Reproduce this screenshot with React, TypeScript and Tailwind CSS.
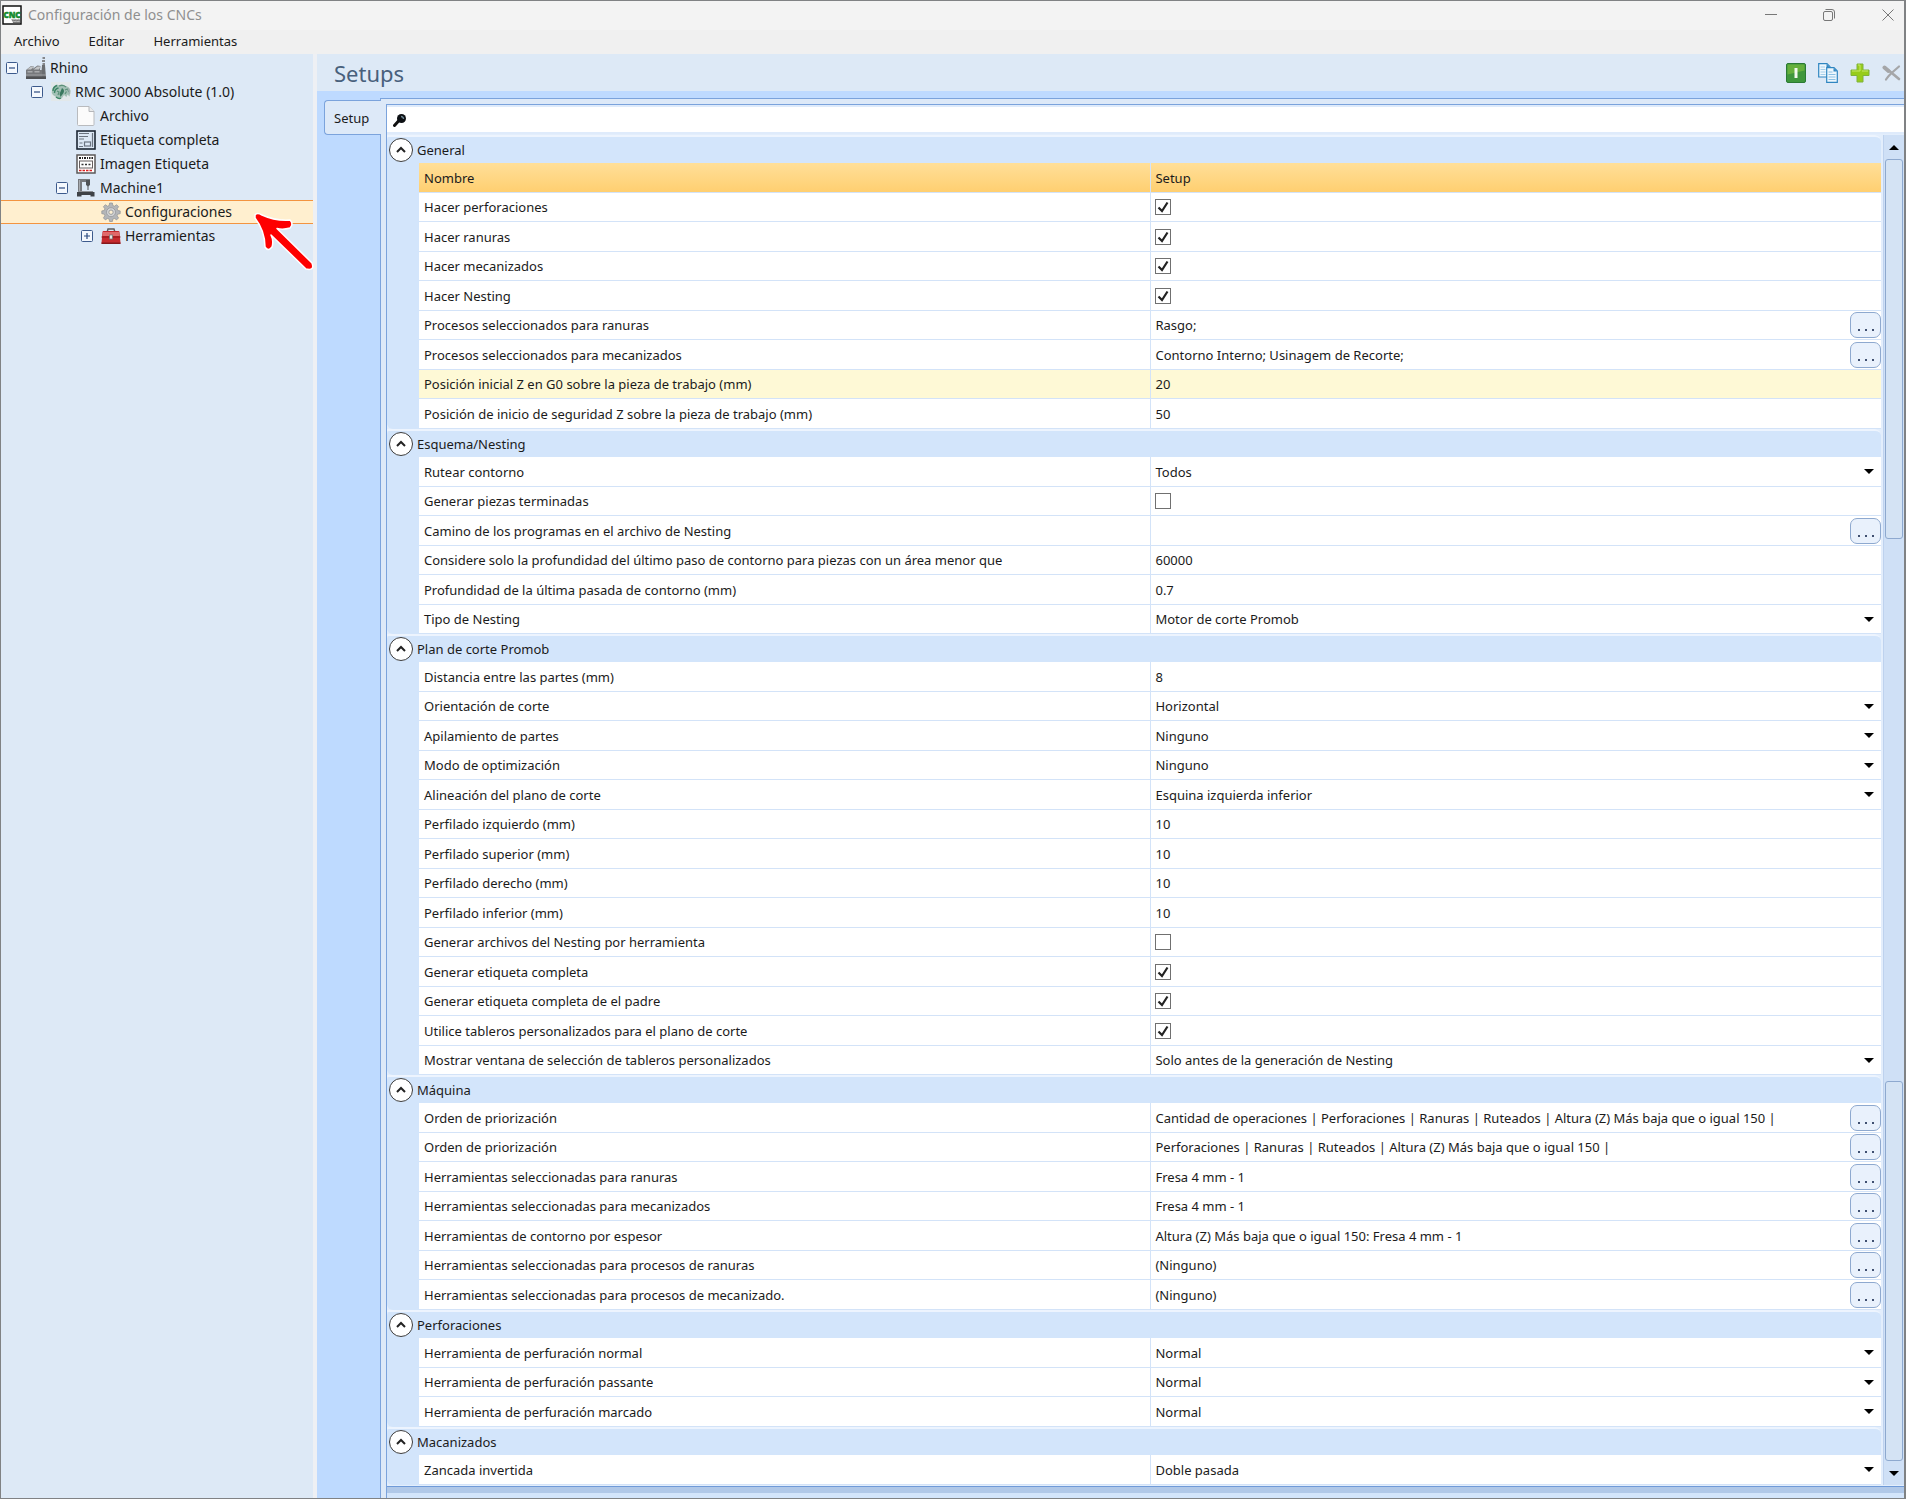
import { useState } from "react";
import type { ReactNode } from "react";

type Row =
  | { kind: "text"; label: string; value: string; tone?: "selected" | "hover" }
  | { kind: "check"; label: string; checked: boolean; tone?: undefined }
  | { kind: "select"; label: string; value: string; tone?: undefined }
  | { kind: "browse"; label: string; value: string; tone?: undefined };

type Section = { title: string; rows: Row[] };

const text = (label: string, value: string, tone?: "selected" | "hover"): Row => ({ kind: "text", label, value, tone });
const check = (label: string, checked: boolean): Row => ({ kind: "check", label, checked });
const select = (label: string, value: string): Row => ({ kind: "select", label, value });
const browse = (label: string, value: string): Row => ({ kind: "browse", label, value });

const sections: Section[] = [
  {
    title: "General",
    rows: [
      text("Nombre", "Setup", "selected"),
      check("Hacer perforaciones", true),
      check("Hacer ranuras", true),
      check("Hacer mecanizados", true),
      check("Hacer Nesting", true),
      browse("Procesos seleccionados para ranuras", "Rasgo;"),
      browse("Procesos seleccionados para mecanizados", "Contorno Interno; Usinagem de Recorte;"),
      text("Posición inicial Z en G0 sobre la pieza de trabajo (mm)", "20", "hover"),
      text("Posición de inicio de seguridad Z sobre la pieza de trabajo (mm)", "50"),
    ],
  },
  {
    title: "Esquema/Nesting",
    rows: [
      select("Rutear contorno", "Todos"),
      check("Generar piezas terminadas", false),
      browse("Camino de los programas en el archivo de Nesting", ""),
      text("Considere solo la profundidad del último paso de contorno para piezas con un área menor que", "60000"),
      text("Profundidad de la última pasada de contorno (mm)", "0.7"),
      select("Tipo de Nesting", "Motor de corte Promob"),
    ],
  },
  {
    title: "Plan de corte Promob",
    rows: [
      text("Distancia entre las partes (mm)", "8"),
      select("Orientación de corte", "Horizontal"),
      select("Apilamiento de partes", "Ninguno"),
      select("Modo de optimización", "Ninguno"),
      select("Alineación del plano de corte", "Esquina izquierda inferior"),
      text("Perfilado izquierdo (mm)", "10"),
      text("Perfilado superior (mm)", "10"),
      text("Perfilado derecho (mm)", "10"),
      text("Perfilado inferior (mm)", "10"),
      check("Generar archivos del Nesting por herramienta", false),
      check("Generar etiqueta completa", true),
      check("Generar etiqueta completa de el padre", true),
      check("Utilice tableros personalizados para el plano de corte", true),
      select("Mostrar ventana de selección de tableros personalizados", "Solo antes de la generación de Nesting"),
    ],
  },
  {
    title: "Máquina",
    rows: [
      browse("Orden de priorización", "Cantidad de operaciones | Perforaciones | Ranuras | Ruteados | Altura (Z) Más baja que o igual 150 |"),
      browse("Orden de priorización", "Perforaciones | Ranuras | Ruteados | Altura (Z) Más baja que o igual 150 |"),
      browse("Herramientas seleccionadas para ranuras", "Fresa 4 mm - 1"),
      browse("Herramientas seleccionadas para mecanizados", "Fresa 4 mm - 1"),
      browse("Herramientas de contorno por espesor", "Altura (Z) Más baja que o igual 150: Fresa 4 mm - 1"),
      browse("Herramientas seleccionadas para procesos de ranuras", "(Ninguno)"),
      browse("Herramientas seleccionadas para procesos de mecanizado.", "(Ninguno)"),
    ],
  },
  {
    title: "Perforaciones",
    rows: [
      select("Herramienta de perfuración normal", "Normal"),
      select("Herramienta de perfuración passante", "Normal"),
      select("Herramienta de perfuración marcado", "Normal"),
    ],
  },
  { title: "Macanizados", rows: [select("Zancada invertida", "Doble pasada")] },
];

/* ---------- icons ---------- */

function CncLogo() {
  return (
    <svg width="20" height="20" viewBox="0 0 20 20" aria-hidden="true">
      <rect x="1" y="1" width="18" height="18" fill="#fff" stroke="#111" strokeWidth="1.5" />
      <path d="M9 14h9v4h-7z" fill="#b9b9b9" />
      <path d="M10 15l2 1 1-1 2 1 1-1 2 1M11 17.500h7" stroke="#777" fill="none" />
      <text x="10" y="13" textAnchor="middle" fontFamily="Noto Sans" fontWeight="900" fontSize="8" fill="#138a2c" stroke="#138a2c" strokeWidth="0.500">CNC</text>
    </svg>
  );
}

function FactoryIcon() {
  return (
    <svg width="20" height="22" viewBox="0 0 20 22" aria-hidden="true">
      <path d="M16.500 0h2.500v2h-2.500zM16 3h3v2h-3zM16.500 6h2.500v2h-2.500z" fill="#85878a" />
      <path d="M16 8h3l1 13h-5z" fill="#6b6d70" />
      <path d="M0 21v-8l5-4 3 .500-1.500 2.500 5-3.500 3 .500-.500 4 2 0v8z" fill="#77797c" />
      <path d="M1 12.500l4-3h3l-3 3zM7.500 12.500l4-3h3l-1.500 3z" fill="#c3c5c7" />
      <path d="M1.500 14h5v1.500h-5zM8.500 14h5v1.500h-5z" fill="#a9abad" />
      <path d="M0 17.500h20v1H0z" fill="#a0a2a4" />
      <path d="M0 19.500h20v2.500H0z" fill="#505255" />
    </svg>
  );
}

function RhinoIcon() {
  return (
    <svg width="20" height="20" viewBox="0 0 20 20" aria-hidden="true">
      <rect x="0" y="0" width="20" height="19" fill="#e2e8ea" />
      <path
        d="M1 8q1-4 5-5.500l2 1q3-2 6 .500 4 0 5.500 4.500l-1 6-2-2-1 2.500-2.500-2-2 3q-4 1-6-1l-3-2q-2-2-1-5z"
        fill="#a3c0b5"
      />
      <path d="M2 9q0-4 4-5.500M3.500 11q0-4 4-5M5 15q3 2.500 5 1" stroke="#3c8565" strokeWidth="1.400" fill="none" />
      <path d="M11 6q3 2 1.500 5l-3 4-1-3z" fill="#39785e" />
      <path d="M8 4q4-1.500 7 1M14 8l2.500-1 1.500 3M14 12l1.500-2.500M6 9l2 1-1 3" stroke="#5b9078" strokeWidth="1.200" fill="none" />
      <path d="M17 6q2 3 1.500 6" stroke="#9fb2b0" strokeWidth="1.500" fill="none" />
    </svg>
  );
}

function PageIcon() {
  return (
    <svg width="20" height="20" viewBox="0 0 20 20" aria-hidden="true">
      <path d="M2.500 0.500h10.500l5 5v13q0 1-1 1h-14.500q-1 0-1-1v-17q0-1 1-1z" fill="#fbfbfb" stroke="#b9bbbe" />
      <path d="M13 0.500v5h5" fill="#e9eaeb" stroke="#b4b6ba" />
    </svg>
  );
}

function LabelIcon() {
  return (
    <svg width="20" height="20" viewBox="0 0 20 20" aria-hidden="true">
      <rect x="1" y="1" width="18" height="18" fill="#dce8f5" stroke="#1c2633" strokeWidth="1.600" />
      <path d="M3 3.500h10M3 6.500h9M3 9h5M3.500 13h3M3 16.500h4" stroke="#6b7480" strokeWidth="1.200" fill="none" />
      <rect x="8.500" y="12" width="6" height="4" fill="none" stroke="#6b7480" strokeWidth="1.200" />
      <path d="M16.500 3v14" stroke="#6b7480" strokeWidth="1.200" />
    </svg>
  );
}

function ImageLabelIcon() {
  return (
    <svg width="20" height="20" viewBox="0 0 20 20" aria-hidden="true">
      <rect x="1" y="1" width="18" height="18" fill="#fff" stroke="#5b5858" strokeWidth="1.500" />
      <path d="M3 4h2M6 4h1M8 4h2M11 4h1M13 4h1.500M15.500 4h1.500" stroke="#222" strokeWidth="2" />
      <rect x="3.500" y="7" width="13" height="7" fill="none" stroke="#665f5f" />
      <path d="M5.500 10.500h2M9 10.500h2M12.500 10.500h2" stroke="#333" strokeWidth="1.600" />
      <path d="M3 16.500h14" stroke="#d22" strokeWidth="1.500" strokeDasharray="2.500 1" />
    </svg>
  );
}

function MachineIcon() {
  return (
    <svg width="20" height="20" viewBox="0 0 20 20" aria-hidden="true">
      <path d="M2 1h12v3H6v9H2z" fill="#77797d" />
      <path d="M3.500 2v11" stroke="#a9acb0" />
      <path d="M10 2h4v5l-2 1.500-2-1.500z" fill="#505357" />
      <path d="M12 8v4" stroke="#505357" />
      <path d="M2 13h15v1.500H2z" fill="#8d9094" />
      <path d="M1 14h17.500v4.500h-4V17h-9v1.500H1z" fill="#3f4246" />
    </svg>
  );
}

function GearIcon() {
  return (
    <svg width="20" height="20" viewBox="0 0 20 20" aria-hidden="true">
      <path
        d="M8.600 1h2.800l.4 2.500 1.700.7 2.100-1.500 2 2-1.500 2.100.7 1.700 2.400.4v2.800l-2.400.4-.7 1.700 1.500 2.100-2 2-2.100-1.500-1.700.7-.4 2.400H8.600l-.4-2.400-1.700-.7-2.100 1.500-2-2 1.500-2.100-.7-1.700L.8 11.700V8.900l2.400-.4.7-1.700-1.500-2.100 2-2 2.100 1.500 1.700-.7z"
        fill="#b4b6b9"
        stroke="#8e9094"
        strokeWidth="0.700"
      />
      <circle cx="10" cy="10.200" r="4.500" fill="#d3d4d6" stroke="#939599" strokeWidth="0.800" />
      <circle cx="10" cy="10.200" r="2.200" fill="#fdf0d2" stroke="#9a9ca0" />
    </svg>
  );
}

function ToolboxIcon() {
  return (
    <svg width="20" height="20" viewBox="0 0 20 20" aria-hidden="true">
      <path d="M6 6.500l1-3.500h6l1 3.500" fill="none" stroke="#5b5b5b" strokeWidth="1.400" />
      <path d="M1.500 6q0-1 1-1h15q1 0 1 1l1 11q0 1-1 1H1.500q-1 0-1-1z" fill="#c62a2e" />
      <path d="M2 6h16l.500 4h-17z" fill="#e06a6b" />
      <path d="M0.500 11h19" stroke="#8d1416" />
      <rect x="8.500" y="9" width="3" height="4" fill="#e9e9e9" stroke="#777" strokeWidth="0.800" />
      <path d="M0.500 16.500h19V18h-19z" fill="#86181b" />
    </svg>
  );
}

/* ---------- tree ---------- */

type Node = { label: string; icon: ReactNode; indent: string; expander?: "minus" | "plus"; selected?: boolean };

const nodes: Node[] = [
  { label: "Rhino", icon: <FactoryIcon />, indent: "pl-[5px]", expander: "minus" },
  { label: "RMC 3000 Absolute (1.0)", icon: <RhinoIcon />, indent: "pl-[30px]", expander: "minus" },
  { label: "Archivo", icon: <PageIcon />, indent: "pl-[55px]" },
  { label: "Etiqueta completa", icon: <LabelIcon />, indent: "pl-[55px]" },
  { label: "Imagen Etiqueta", icon: <ImageLabelIcon />, indent: "pl-[55px]" },
  { label: "Machine1", icon: <MachineIcon />, indent: "pl-[55px]", expander: "minus" },
  { label: "Configuraciones", icon: <GearIcon />, indent: "pl-[80px]", selected: true },
  { label: "Herramientas", icon: <ToolboxIcon />, indent: "pl-[80px]", expander: "plus" },
];

function Tree() {
  return (
    <ul className="pt-[2px]">
      {nodes.map((n) => (
        <li
          key={n.label}
          className={`flex h-6 items-center gap-1 ${n.indent} ${
            n.selected ? "border-y border-[#f39440] bg-[#ffefcf]" : ""
          }`}
        >
          {n.expander ? (
            <button type="button" aria-label={`Alternar ${n.label}`} className="mr-1 size-3">
              <svg width="12" height="12" viewBox="0 0 12 12" aria-hidden="true">
                <rect x="0.500" y="0.500" width="11" height="11" rx="1" fill="#f4f8fd" stroke="#3c5a8c" />
                <path d={n.expander === "plus" ? "M3 6h6M6 3v6" : "M3 6h6"} stroke="#2a4a80" strokeWidth="1.200" />
              </svg>
            </button>
          ) : (
            <span className="mr-1 size-3" />
          )}
          <span className="flex w-5 justify-center">{n.icon}</span>
          <span className="text-[14px] leading-5 text-[#1b1b1b]">{n.label}</span>
        </li>
      ))}
    </ul>
  );
}

function PointerArrow() {
  return (
    <svg width="70" height="70" viewBox="0 0 70 70" aria-hidden="true">
      <path
        d="M5 9Q7 6 12 9Q25 15 40 14Q44 18 40 22Q33 24 27 22.500L62 57Q65 65 56 63L21 29Q24 35 22 41Q18 46 15 41Q15 25 5 12Z"
        fill="#fe0000"
        stroke="#fff"
        strokeWidth="1.500"
        strokeLinejoin="round"
      />
    </svg>
  );
}

/* ---------- property grid ---------- */

function Caret({ up = false }: { up?: boolean }) {
  return (
    <svg width="10" height="5" viewBox="0 0 10 5" aria-hidden="true">
      <path d={up ? "M5 0l5 5H0z" : "M0 0h10L5 5z"} fill="#000" />
    </svg>
  );
}

function ValueCell({ row, id }: { row: Row; id: string }) {
  if (row.kind === "check") {
    return (
      <span className="relative flex size-4">
        <input
          id={id}
          type="checkbox"
          defaultChecked={row.checked}
          className="peer size-4 appearance-none border border-[#707070] bg-white"
        />
        <svg
          className="pointer-events-none absolute inset-0 hidden peer-checked:block"
          width="16"
          height="16"
          viewBox="0 0 16 16"
          aria-hidden="true"
        >
          <path d="M3.500 8.500l3.500 3.500L12.500 3.500" fill="none" stroke="#222" strokeWidth="2.200" />
        </svg>
      </span>
    );
  }
  if (row.kind === "select") {
    return (
      <span className="relative flex items-center">
        <select id={id} className="h-5 w-full appearance-none bg-transparent pr-6 leading-5 outline-none">
          <option>{row.value}</option>
        </select>
        <span className="pointer-events-none absolute right-[7px]">
          <Caret />
        </span>
      </span>
    );
  }
  return (
    <span className="flex items-center">
      <input id={id} defaultValue={row.value} className="h-5 min-w-0 flex-1 bg-transparent leading-5 outline-none" />
      {row.kind === "browse" && (
        <button
          type="button"
          aria-label={`Examinar ${row.label}`}
          className="flex h-[26px] w-[31px] items-end justify-center gap-[5px] rounded-[7px] border border-[#8ea9cf] bg-[#e9f1fc] pb-[6px]"
        >
          <span className="size-[2px] bg-[#3f4f70]" />
          <span className="size-[2px] bg-[#3f4f70]" />
          <span className="size-[2px] bg-[#3f4f70]" />
        </button>
      )}
    </span>
  );
}

function PropertySection({ section, index }: { section: Section; index: number }) {
  const [open, setOpen] = useState(true);
  return (
    <section className="rounded-md bg-[#d3e5fb]">
      <header className="flex h-7 items-center gap-1 rounded-tr-md border-t-2 border-[#edf4fe] pl-[2px]">
        <button
          type="button"
          aria-label={`Contraer ${section.title}`}
          onClick={() => setOpen(!open)}
          className="flex size-6 items-center justify-center rounded-full border border-[#3c3c3c] bg-white"
        >
          <svg width="12" height="12" viewBox="0 0 12 12" aria-hidden="true">
            <path d="M2 8l4-4 4 4" fill="none" stroke="#222" strokeWidth="2" />
          </svg>
        </button>
        <h2 className="leading-5">{section.title}</h2>
      </header>
      {open && (
        <div className="pl-8">
          <table className="w-full table-fixed border-separate border-spacing-0">
            <colgroup>
              <col className="w-[50.1%]" />
              <col />
            </colgroup>
            <tbody>
              {section.rows.map((row, i) => {
                const id = `campo-${index}-${i}`;
                const tone =
                  row.tone === "selected"
                    ? "bg-linear-to-b from-[#ffdf98] to-[#ffcf70]"
                    : row.tone === "hover"
                      ? "bg-[#fef9d6]"
                      : "bg-white";
                return (
                  <tr key={id} className="odd:h-[30px] even:h-[29px]">
                    <th scope="row" className={`border-b border-r border-[#d3e3f8] p-0 pl-[5px] text-left font-normal ${tone}`}>
                      <label htmlFor={id} className="block leading-5">
                        {row.label}
                      </label>
                    </th>
                    <td className={`border-b border-[#d3e3f8] p-0 pl-1 ${tone}`}>
                      <ValueCell row={row} id={id} />
                    </td>
                  </tr>
                );
              })}
            </tbody>
          </table>
        </div>
      )}
    </section>
  );
}

function ScrollTrack() {
  return (
    <div className="flex w-[21px] flex-col items-center border-l border-[#bed2ee] bg-[#cfe0f6]">
      <button type="button" aria-label="Subir" className="flex h-6 w-full items-center justify-center">
        <Caret up />
      </button>
      <div className="h-[380px] w-[18px] rounded-[3px] border border-[#8ea9cf] bg-[#d4e3f4]" />
      <div className="flex-1" />
      <div className="h-[380px] w-[18px] rounded-[3px] border border-[#8ea9cf] bg-[#d4e3f4]" />
      <button type="button" aria-label="Bajar" className="flex h-6 w-full items-center justify-center">
        <Caret />
      </button>
    </div>
  );
}

/* ---------- window ---------- */

function TitleBar() {
  return (
    <header className="flex h-[29px] items-center bg-[#f3f3f3] pb-[2px] pl-px">
      <CncLogo />
      <h1 className="flex-1 pl-[6px] text-[14px] leading-5 text-[#8f8f8f]">Configuración de los CNCs</h1>
      <div className="flex items-center pr-[10px] text-[#777]">
        <button type="button" aria-label="Minimizar" className="mr-[46px] size-3">
          <svg width="12" height="12" viewBox="0 0 12 12"><path d="M0 5.500h12" stroke="currentColor" /></svg>
        </button>
        <button type="button" aria-label="Restaurar" className="mr-[47px] size-3">
          <svg width="12" height="12" viewBox="0 0 12 12" fill="none" stroke="currentColor">
            <rect x="0.500" y="2.500" width="9" height="9" rx="1.500" />
            <path d="M2.500 0.500h6.500a2.500 2.500 0 0 1 2.500 2.500v6.500" />
          </svg>
        </button>
        <button type="button" aria-label="Cerrar" className="size-3">
          <svg width="12" height="12" viewBox="0 0 12 12" stroke="currentColor"><path d="M0.500 0.500l11 11M11.500 0.500l-11 11" /></svg>
        </button>
      </div>
    </header>
  );
}

function Toolbar() {
  return (
    <div className="flex items-center pr-[2px]">
      <button type="button" aria-label="Activar" className="mr-3 size-5">
        <svg width="20" height="20" viewBox="0 0 20 20">
          <rect x="0.500" y="0.500" width="19" height="19" rx="1.500" fill="#3f973c" stroke="#2b7a34" />
          <path d="M1.500 1.500h17v6l-17 4z" fill="#66b03c" />
          <path d="M8.500 5h3v10h-3z" fill="#f2f9ee" />
        </svg>
      </button>
      <button type="button" aria-label="Duplicar" className="mr-3 size-5">
        <svg width="20" height="20" viewBox="0 0 20 20">
          <path d="M0.700 0.700h8.300l3 3v10.300H0.700z" fill="#eef7fd" stroke="#2f86c1" strokeWidth="1.200" />
          <path d="M8.500 1v3h3z" fill="#2f86c1" />
          <path d="M2.500 4h4.500M2.500 6.500h5M2.500 9h5M2.500 11.500h5" stroke="#a5cfea" fill="none" />
          <path d="M8.700 4.700h7.300l3.300 3.300v11.300H8.700z" fill="#eef7fd" stroke="#2f86c1" strokeWidth="1.200" />
          <path d="M15.500 5v3.500h3.500z" fill="#2f86c1" />
          <path d="M10.500 9h4M10.500 11.500h7M10.500 14h7M10.500 16.500h7" stroke="#8cc0e4" fill="none" />
        </svg>
      </button>
      <button type="button" aria-label="Agregar" className="mr-3 size-5">
        <svg width="20" height="20" viewBox="0 0 20 20">
          <path d="M7 1h6v6h6v5.500h-6v6.500H7v-6.500H1V7h6z" fill="#97cc1b" stroke="#7fb33a" />
          <path d="M8 2h2v6H2M12 8h6" stroke="#c8e86b" fill="none" />
        </svg>
      </button>
      <button type="button" aria-label="Eliminar" className="size-5">
        <svg width="20" height="20" viewBox="0 0 20 20" fill="none" stroke="#a5a6a8" strokeLinecap="round">
          <path d="M3 5q5 3 8 6l6 5" strokeWidth="2.600" />
          <path d="M17 3.500L9 10.500q-3 3-5 6" strokeWidth="2.200" />
          <path d="M2.500 4.500l4 3.500" strokeWidth="4" />
        </svg>
      </button>
    </div>
  );
}

export default function App() {
  return (
    <div className="flex min-h-screen flex-col border border-r-2 border-[#808284] bg-[#dde9f6] font-['Noto_Sans',sans-serif] text-[13px] text-[#1b1b1b]">
      <TitleBar />
      <nav className="flex h-6 items-center gap-[29px] bg-[#f0f0f0] pb-[2px] pl-[13px] leading-5">
        <button type="button">Archivo</button>
        <button type="button">Editar</button>
        <button type="button">Herramientas</button>
      </nav>
      <div className="flex flex-1">
        <aside className="relative w-[312px] shrink-0 bg-[#dde9f6]">
          <Tree />
          <div className="absolute left-[249px] top-[152px] z-10">
            <PointerArrow />
          </div>
        </aside>
        <div className="w-1 shrink-0 bg-[#eef0f4]" />
        <main className="flex min-w-0 flex-1 flex-col bg-[#bedaff]">
          <header className="flex h-[37px] items-center justify-between bg-[#dde9f6] pl-[17px]">
            <h2 className="text-[22px] leading-7 text-[#48607c]">Setups</h2>
            <Toolbar />
          </header>
          <div className="flex flex-1 pl-[7px] pt-[7px]">
            <div role="tablist" className="relative z-10 -mr-px pt-[2px]">
              <button
                type="button"
                role="tab"
                aria-selected="true"
                className="h-[35px] w-[57px] rounded-l border border-r-0 border-[#7ba3dc] bg-[#dde9f8] pl-[9px] text-left leading-5"
              >
                Setup
              </button>
            </div>
            <div className="flex min-w-0 flex-1 flex-col border-l border-t border-[#7ba3dc] bg-[#dde9f8] pl-[5px] pt-[5px]">
              <div className="flex flex-1 flex-col border-l border-t border-[#7ba3dc] bg-[#e3eefc]">
                <label className="flex h-[29px] items-center gap-1 border-y-2 border-[#dfebfb] bg-white pl-[6px]">
                  <svg width="14" height="14" viewBox="0 0 14 14" aria-hidden="true">
                    <path d="M1.500 12.500l4-4.500" stroke="#111" strokeWidth="3" strokeLinecap="round" />
                    <circle cx="8.500" cy="5.500" r="4.500" fill="#0d1014" />
                    <path d="M8 3.500a2.500 2.500 0 0 1 2.500 2.500" stroke="#6f8794" strokeWidth="1.500" fill="none" />
                  </svg>
                  <input type="search" aria-label="Buscar" className="h-5 min-w-0 flex-1 bg-transparent outline-none" />
                </label>
                <div className="flex flex-1 gap-[2px] pb-px pt-px">
                  <div className="min-w-0 flex-1">
                    {sections.map((s, i) => (
                      <PropertySection key={s.title} section={s} index={i} />
                    ))}
                  </div>
                  <ScrollTrack />
                </div>
                <div className="h-[7px] border-t border-[#6f9ad8] bg-[#b0c8e8]" />
                <div className="h-[5px] bg-[#d3e5fb]" />
              </div>
            </div>
          </div>
        </main>
      </div>
    </div>
  );
}
